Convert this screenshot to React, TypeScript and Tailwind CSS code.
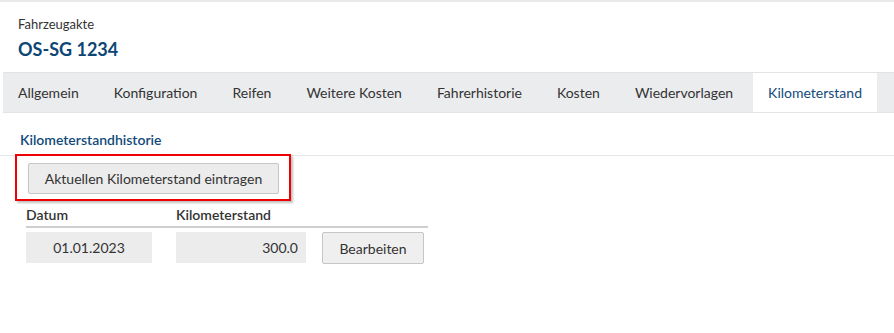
const tabs = [
  'Allgemein',
  'Konfiguration',
  'Reifen',
  'Weitere Kosten',
  'Fahrerhistorie',
  'Kosten',
  'Wiedervorlagen',
  'Kilometerstand',
]

export default function App() {
  const active = 'Kilometerstand'

  return (
    <div className="w-[894px] h-[333px] bg-white text-[#333] font-['Lato',sans-serif] overflow-hidden">
      <div className="border-t-2 border-[#e9e9e9] px-[18px] pt-[13px] pb-[11px]">
        <div className="text-[13px] leading-[18px]">Fahrzeugakte</div>
        <div className="text-[18px] font-bold leading-[24px] mt-[4px] text-[#0d4675]">OS-SG 1234</div>
      </div>

      <div className="ml-[3px] h-[41px] flex gap-[5px] bg-[#ebecee] border-t border-b border-[#e2e3e5]">
        {tabs.map((t) => (
          <div
            key={t}
            className={
              t === active
                ? 'px-[15px] flex items-center text-[14px] bg-white text-[#114a7a]'
                : 'px-[15px] flex items-center text-[14px] text-[#333]'
            }
          >
            {t}
          </div>
        ))}
      </div>

      <div className="mt-[18px] px-[20px] pb-[6px] border-b border-[#e6e6e6] text-[14px] font-semibold leading-[18px] text-[#114a7a]">
        Kilometerstandhistorie
      </div>

      <div className="ml-[15px] mt-[-2px] w-[276px] h-[47px] border-[2px] border-[#f00000] shadow-[2px_2px_2px_rgba(0,0,0,0.25)] pl-[11px] pt-[7px]">
        <button className="w-[251px] h-[31px] bg-[#ececec] border border-[#c6c6c6] rounded-[2px] text-[14px] text-[#333]">
          Aktuellen Kilometerstand eintragen
        </button>
      </div>

      <div className="ml-[26px] w-[402px]">
        <div className="flex h-[27px] items-center text-[14px] font-semibold border-b-2 border-[#cfcfcf] pt-[2px]">
          <div className="w-[150px]">Datum</div>
          <div>Kilometerstand</div>
        </div>
        <div className="flex mt-[4px] items-stretch text-[14px]">
          <div className="w-[126px] h-[31px] bg-[#ececec] flex items-center justify-center">01.01.2023</div>
          <div className="ml-[24px] w-[130px] h-[31px] bg-[#ececec] flex items-center justify-end pr-[8px]">300.0</div>
          <button className="ml-[16px] w-[102px] h-[32px] bg-[#efefef] border border-[#c6c6c6] rounded-[2px] text-[14px] text-[#333]">
            Bearbeiten
          </button>
        </div>
      </div>
    </div>
  )
}
